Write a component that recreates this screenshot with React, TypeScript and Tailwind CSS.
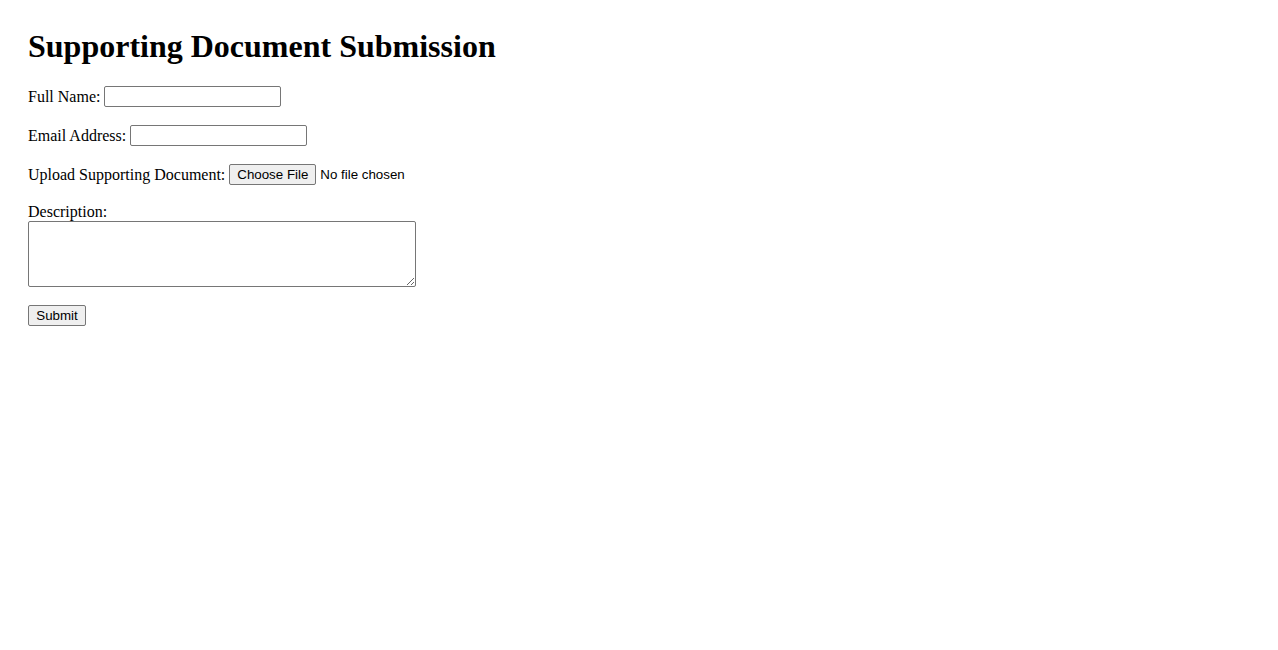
import { useState } from 'react';

const serif = 'font-["Liberation_Serif","Times_New_Roman",serif]';
const sans = 'font-["Liberation_Sans",Arial,sans-serif]';

export default function App() {
  const [name, setName] = useState('');
  const [email, setEmail] = useState('');
  const [desc, setDesc] = useState('');

  const inputCls =
    'w-[177px] h-[21px] border border-[#767676] rounded-[2px] bg-white px-[2px] text-[13.33px] outline-none';
  const btnCls = `${sans} h-[21px] border border-[#767676] rounded-[2px] bg-[#efefef] text-[13.33px] text-black leading-none`;

  return (
    <div className={`${serif} min-h-[650px] bg-white pt-[28px] pl-[28px] text-black`}>
      <h1 className="text-[32px] font-bold leading-[37px]">Supporting Document Submission</h1>

      <form className="mt-[21px] flex flex-col" onSubmit={(e) => e.preventDefault()}>
        <div className="flex items-center h-[21px] gap-[4px] text-[16px]">
          <label htmlFor="name">Full Name:</label>
          <input id="name" className={inputCls} value={name} onChange={(e) => setName(e.target.value)} />
        </div>

        <div className="mt-[18px] flex items-center h-[21px] gap-[4px] text-[16px]">
          <label htmlFor="email">Email Address:</label>
          <input id="email" type="email" className={inputCls} value={email} onChange={(e) => setEmail(e.target.value)} />
        </div>

        <div className="mt-[18px] flex items-center h-[21px] gap-[4px] text-[16px]">
          <label>Upload Supporting Document:</label>
          <button type="button" className={`${btnCls} w-[87px]`}>Choose File</button>
          <span className={`${sans} text-[13.33px]`}>No file chosen</span>
        </div>

        <label htmlFor="desc" className="mt-[18px] text-[16px] leading-[18px]">Description:</label>
        <textarea
          id="desc"
          className="w-[388px] h-[66px] border border-[#767676] rounded-[2px] outline-none"
          value={desc}
          onChange={(e) => setDesc(e.target.value)}
        />

        <div className="mt-[18px] flex">
          <button type="submit" className={`${btnCls} w-[58px]`}>Submit</button>
        </div>
      </form>
    </div>
  );
}
